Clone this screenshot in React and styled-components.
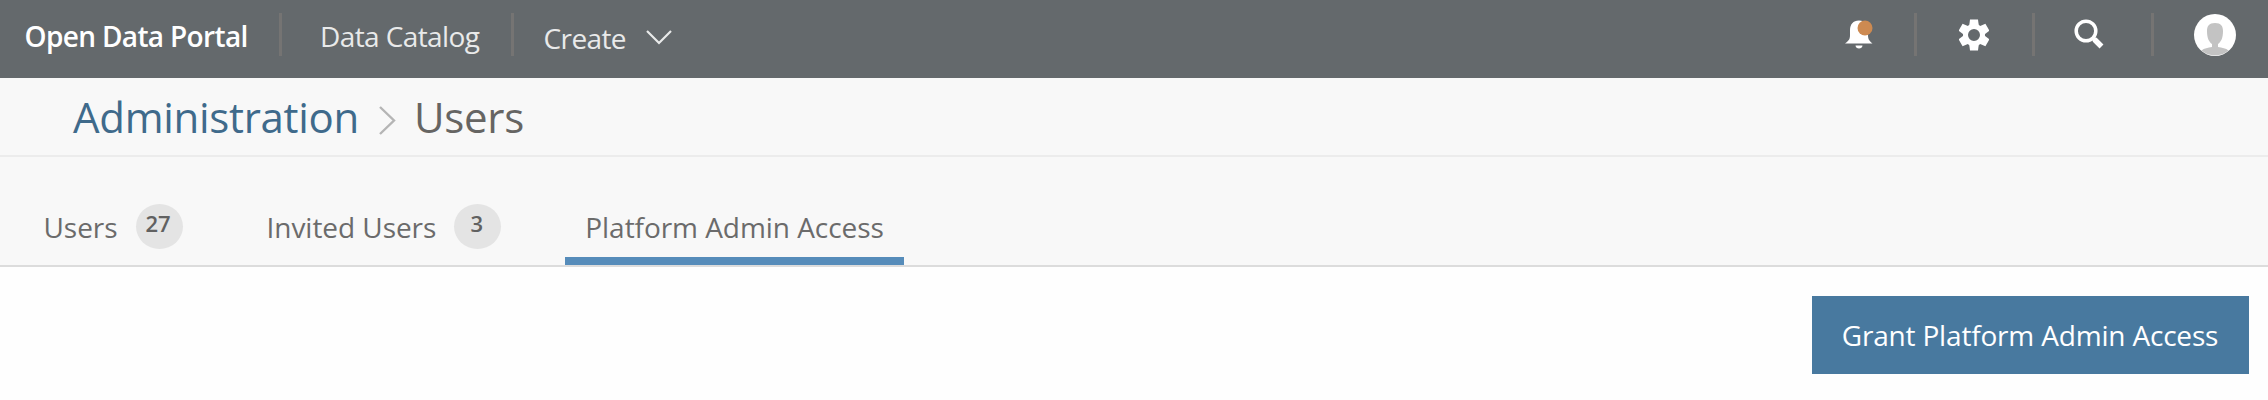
import React from 'react';
import styled, { createGlobalStyle } from 'styled-components';

const GlobalStyle = createGlobalStyle`
    * {
        box-sizing: border-box;
    }

    body {
        margin: 0;
        background: #fefefe;
        color: #6b6b6b;
        font-family: 'Open Sans', 'Noto Sans', sans-serif;
    }
`;

const NavBar = styled.nav`
    display: flex;
    align-items: flex-start;
    justify-content: space-between;
    height: 78px;
    padding: 13px 32px 0 24.5px;
    background: #64696c;
`;

const NavGroup = styled.div`
    display: flex;
    align-items: center;
    height: 43px;
`;

const Divider = styled.span`
    flex: none;
    width: 3px;
    height: 43px;
    margin: 0 ${props => props.$right || 0}px 0 ${props => props.$left || 0}px;
    background: #757473;
`;

const NavLink = styled.a`
    display: flex;
    align-items: center;
    width: ${props => props.$width}px;
    margin-top: ${props => props.$drop || 3}px;
    color: ${props => (props.$brand ? '#ffffff' : '#e9eaea')};
    font-size: 28px;
    font-weight: ${props => (props.$brand ? 600 : 400)};
    letter-spacing: ${props => (props.$brand ? -0.65 : -0.6)}px;
    line-height: 38px;
    white-space: nowrap;

    svg {
        margin: 0 0 2px auto;
    }
`;

const IconSlot = styled.button`
    display: flex;
    align-items: center;
    justify-content: center;
    width: ${props => props.$width || 115.5}px;
    height: 43px;
    padding: 0 ${props => props.$shift || 0}px 0 0;
    border: 0;
    background: none;
`;

const Avatar = styled.svg`
    display: block;
    margin-left: 40.5px;
`;

const TitleBar = styled.header`
    display: flex;
    align-items: center;
    height: 79px;
    padding: 1px 0 0 73px;
    border-bottom: 2px solid #ececec;
    background: #f8f8f8;

    svg {
        margin: 6px 18px 0 19px;
    }
`;

const Crumb = styled.span`
    color: ${props => (props.$link ? '#3f6a8b' : '#666563')};
    font-size: 42px;
    letter-spacing: -0.3px;
    line-height: 58px;
`;

const Tabs = styled.div`
    display: flex;
    align-items: flex-end;
    height: 110px;
    padding-left: 17.5px;
    border-bottom: 2px solid #dcdcdc;
    background: #f8f8f8;
`;

const Tab = styled.a`
    display: flex;
    align-items: center;
    height: 69px;
    margin-right: ${props => props.$gap || 0}px;
    padding: ${props => (props.$active ? '0 20px' : '0 26px 8px')};
    border-bottom: ${props => (props.$active ? '8px solid #568cba' : 'none')};
    font-size: 28px;
    letter-spacing: -0.05px;
    line-height: 38px;
    white-space: nowrap;
`;

const Badge = styled.span`
    width: 47px;
    height: 45px;
    margin-left: 18px;
    padding: 6px 2px 0 0;
    border-radius: 50%;
    background: #e4e4e4;
    color: #616161;
    font-size: 22px;
    font-weight: 600;
    line-height: 26px;
    text-align: center;
`;

const Actions = styled.div`
    display: flex;
    justify-content: flex-end;
    padding: 29px 19.5px 0 0;
`;

const GrantButton = styled.button`
    width: 437px;
    height: 78px;
    padding: 0;
    border: 0;
    background: #48799f;
    color: #ffffff;
    font-family: inherit;
    font-size: 28px;
    letter-spacing: -0.18px;
    line-height: 38px;
`;

const BellIcon = () => (
    <svg width="28" height="30" viewBox="0 0 28 30">
        <path
            d="M0 23.5C4 20.5 5 19 5 15V10C5 4.5 8 .5 14 .5S23 4.5 23 10v5c0 4 1 5.5 4.5 8.5z"
            fill="#fff"
        />
        <path d="M10.5 25.5h7c0 4-7 4-7 0z" fill="#fff" />
        <circle cx="20" cy="8" r="7.5" fill="#cd8a51" />
    </svg>
);

const GearIcon = () => (
    <svg width="30" height="32" viewBox="-15 -16 30 32">
        <g fill="#fff">
            {[0, 60, 120, 180, 240, 300].map(angle => (
                <path
                    key={angle}
                    d="M-5-8L-4-15.5H4L5-8z"
                    transform={`rotate(${angle})`}
                />
            ))}
        </g>
        <circle r="8.5" fill="none" stroke="#fff" strokeWidth="5" />
    </svg>
);

const SearchIcon = () => (
    <svg width="30" height="31" viewBox="0 0 30 31" fill="none" stroke="#fff">
        <circle cx="12" cy="12" r="9.8" strokeWidth="3.5" />
        <path d="M18.5 18.5l3 3" strokeWidth="4" />
        <path d="M20.5 20.5l7 7" strokeWidth="5.5" />
    </svg>
);

const App = () => (
    <>
        <GlobalStyle />
        <NavBar>
            <NavGroup>
                <NavLink $brand $width={226}>
                    Open Data Portal
                </NavLink>
                <Divider $left={28.5} $right={38} />
                <NavLink $width={160}>Data Catalog</NavLink>
                <Divider $left={30.5} $right={30} />
                <NavLink $drop={7} $width={128}>
                    Create
                    <svg width="26" height="15" viewBox="0 0 26 15">
                        <path
                            d="M1 1l12 12L25 1"
                            fill="none"
                            stroke="#e9eaea"
                            strokeWidth="2.2"
                        />
                    </svg>
                </NavLink>
            </NavGroup>
            <NavGroup>
                <IconSlot $width={109}>
                    <BellIcon />
                </IconSlot>
                <Divider />
                <IconSlot>
                    <GearIcon />
                </IconSlot>
                <Divider />
                <IconSlot $shift={8}>
                    <SearchIcon />
                </IconSlot>
                <Divider />
                <Avatar width="42" height="42" viewBox="0 0 42 42">
                    <circle cx="21" cy="21" r="21" fill="#fff" />
                    <path
                        d="M21 9c6 0 8 3 8 8 0 7-2 11-5 13v3c4 1 8 1 10.5 3.5A21 21 0 0 1 7.5 36.5C10 34 14 34 18 33v-3c-3-2-5-6-5-13 0-5 2-8 8-8z"
                        fill="#c3c3c3"
                    />
                </Avatar>
            </NavGroup>
        </NavBar>
        <TitleBar>
            <Crumb $link>Administration</Crumb>
            <svg width="18" height="29" viewBox="0 0 18 29">
                <path
                    d="M2 1l14 13.5L2 28"
                    fill="none"
                    stroke="#b5b5b5"
                    strokeWidth="2.4"
                />
            </svg>
            <Crumb>Users</Crumb>
        </TitleBar>
        <Tabs>
            <Tab $gap={32}>
                Users <Badge>27</Badge>
            </Tab>
            <Tab $gap={38}>
                Invited Users <Badge>3</Badge>
            </Tab>
            <Tab $active>Platform Admin Access</Tab>
        </Tabs>
        <Actions>
            <GrantButton>Grant Platform Admin Access</GrantButton>
        </Actions>
    </>
);

export default App;
